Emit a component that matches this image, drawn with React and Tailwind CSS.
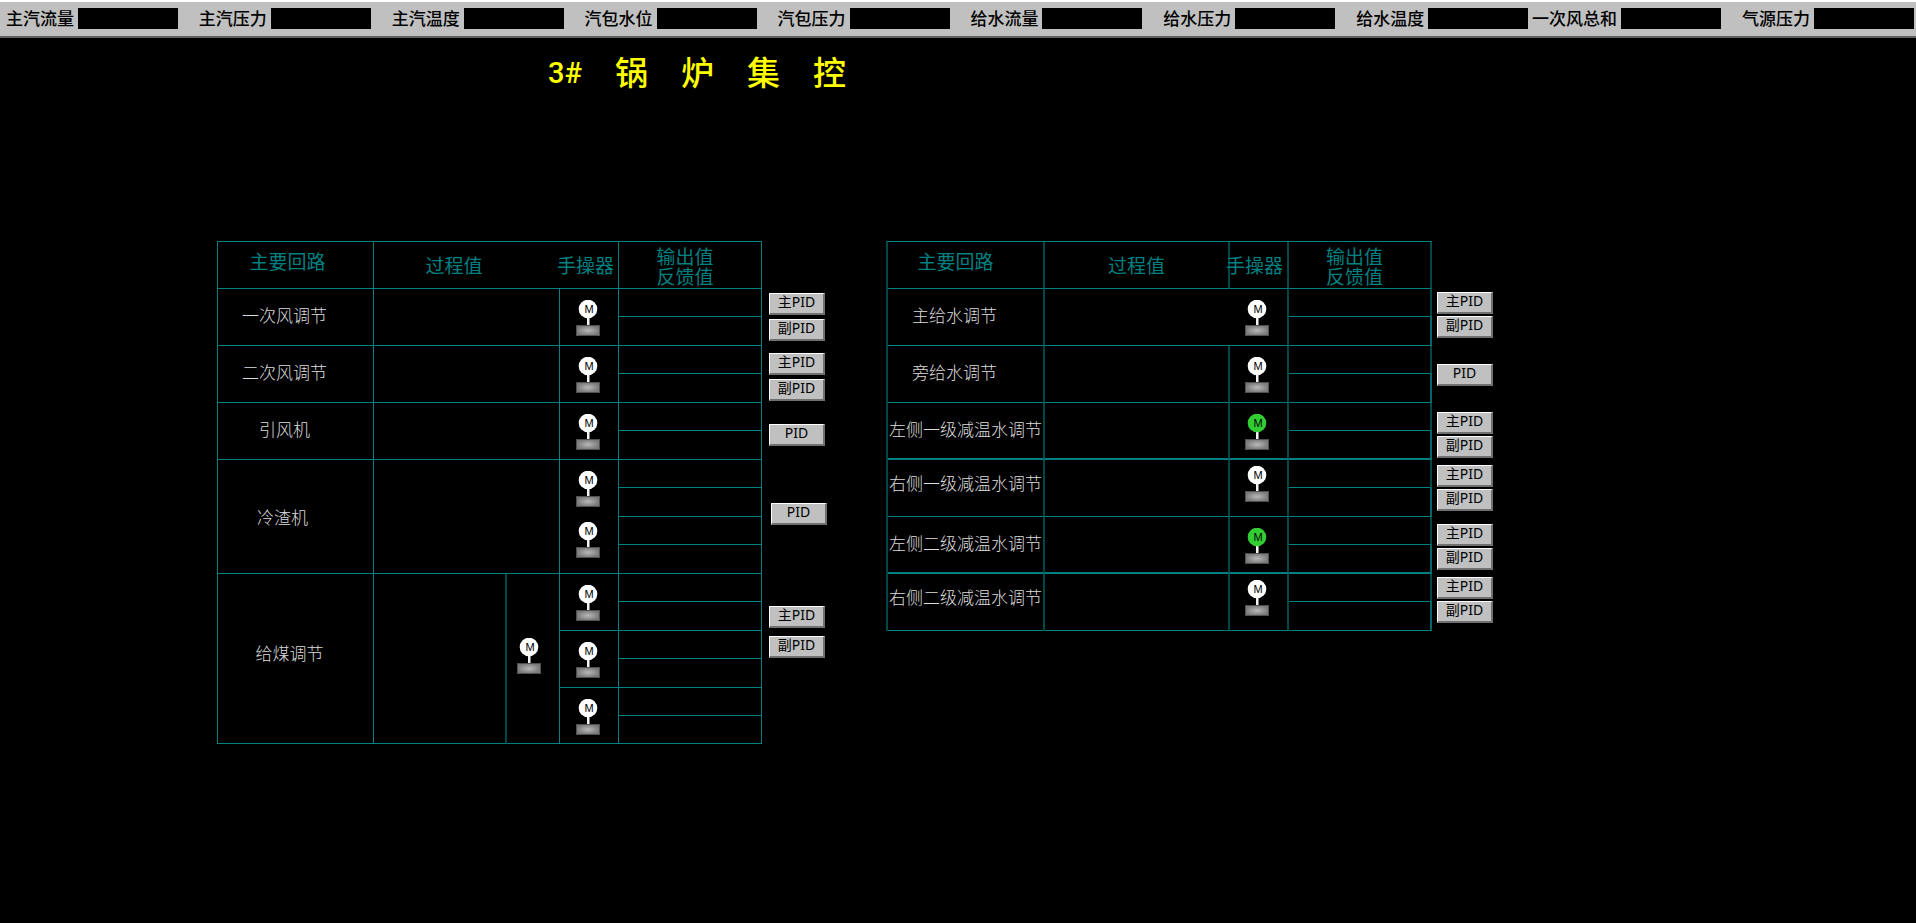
import React from "react";

const METERS = [
  "主汽流量", "主汽压力", "主汽温度", "汽包水位", "汽包压力",
  "给水流量", "给水压力", "给水温度", "一次风总和", "气源压力",
];

function Motor({ on = false }) {
  return (
    <svg width="24" height="36" viewBox="0 0 24 36" role="img" aria-label={on ? "电机运行" : "电机停止"} className="block">
      <defs>
        <radialGradient id="motor-base">
          <stop offset="0" stopColor="#b8b8b8" />
          <stop offset="1" stopColor="#7a7a7a" />
        </radialGradient>
      </defs>
      <rect x="11" y="18" width="3" height="8" fill="#808080" />
      <rect x="11" y="18" width="2" height="8" fill="#f4f4f4" />
      <circle cx="12" cy="9" r="9.3" fill={on ? "#32cd32" : "#ffffff"} />
      <text x="13" y="13" textAnchor="middle" fontSize="11" fontFamily="'Liberation Sans', sans-serif" fill="#000000">M</text>
      <rect x="0.5" y="25.5" width="23" height="10" fill="url(#motor-base)" stroke="#505050" />
    </svg>
  );
}

function PidButton({ kind = "" }) {
  return (
    <button
      type="button"
      className="flex h-[22px] w-14 justify-center border-t border-r-2 border-b-2 border-l border-t-white border-r-[#707070] border-b-[#707070] border-l-white bg-[#c0c0c0] font-['Noto_Sans','Noto_Sans_CJK_SC',sans-serif] text-sm leading-4 whitespace-nowrap text-black"
    >
      {kind}PID
    </button>
  );
}

function PidGroup({ kinds, className }) {
  return (
    <div className={`flex flex-col ${className}`}>
      {kinds.map((kind) => (
        <PidButton key={kind} kind={kind} />
      ))}
    </div>
  );
}

const HEAD = "border-b border-b-[#008080] p-0 text-[19px] leading-5 font-normal whitespace-nowrap text-[#008080]";
const CELL = "border-b border-b-[#008080] p-0 whitespace-nowrap";
const LEFT = "border-r border-r-[#008080]";
const RIGHT = "border-r-2 border-r-[#004848]";

function OutputCell({ line }) {
  return <td className={`${CELL} ${line}`} />;
}

function MotorCell({ line, on, rowSpan = 2, count = 1, pad = "pt-[11px]" }) {
  return (
    <td rowSpan={rowSpan} className={`${CELL} ${line} align-top`}>
      <div className={`flex flex-col items-center gap-[15px] pr-[3px] ${pad}`}>
        {Array.from({ length: count }, (_, i) => (
          <Motor key={i} on={on} />
        ))}
      </div>
    </td>
  );
}

function LeftTable() {
  const half = (
    <tr className="h-[29px]">
      <OutputCell line={LEFT} />
    </tr>
  );
  return (
    <table className="w-full table-fixed border-separate border-spacing-0 border-t border-l border-[#008080] text-[17px] leading-5 text-[#dcdcdc]">
      <colgroup>
        <col className="w-[28.68%]" />
        <col className="w-[24.45%]" />
        <col className="w-[9.74%]" />
        <col className="w-[10.85%]" />
        <col className="w-[26.28%]" />
      </colgroup>
      <thead>
        <tr className="h-[47px]">
          <th scope="col" className={`${HEAD} ${LEFT} pr-4 pb-2`}>主要回路</th>
          <th scope="col" colSpan={2} className={`${HEAD} pr-[26px]`}>过程值</th>
          <th scope="col" className={`${HEAD} ${LEFT}`}>
            <div className="flex justify-end pr-1">
              <span>手操器</span>
            </div>
          </th>
          <th scope="col" className={`${HEAD} ${LEFT} pt-0.5 pr-2.5`}>输出值<br />反馈值</th>
        </tr>
      </thead>
      <tbody>
        {["一次风调节", "二次风调节", "引风机"].map((name) => (
          <React.Fragment key={name}>
            <tr className="h-7">
              <th scope="row" rowSpan={2} className={`${CELL} ${LEFT} pr-[22px] pb-1 font-light`}>{name}</th>
              <td rowSpan={2} colSpan={2} className={`${CELL} ${LEFT}`} />
              <MotorCell line={LEFT} />
              <OutputCell line={LEFT} />
            </tr>
            {half}
          </React.Fragment>
        ))}
        <tr className="h-7">
          <th scope="row" rowSpan={4} className={`${CELL} ${LEFT} pr-[26px] font-light`}>冷渣机</th>
          <td rowSpan={4} colSpan={2} className={`${CELL} ${LEFT}`} />
          <MotorCell line={LEFT} rowSpan={4} count={2} />
          <OutputCell line={LEFT} />
        </tr>
        {half}
        <tr className="h-7">
          <OutputCell line={LEFT} />
        </tr>
        {half}
        <tr className="h-7">
          <th scope="row" rowSpan={6} className={`${CELL} ${LEFT} pr-3 pb-3 font-light`}>给煤调节</th>
          <td rowSpan={6} className={`${CELL} ${RIGHT}`} />
          <td rowSpan={6} className={`${CELL} ${LEFT} pb-1.5`}>
            <div className="flex justify-center pr-2">
              <Motor />
            </div>
          </td>
          <MotorCell line={LEFT} />
          <OutputCell line={LEFT} />
        </tr>
        {half}
        <tr className="h-7">
          <MotorCell line={LEFT} />
          <OutputCell line={LEFT} />
        </tr>
        {half}
        <tr className="h-7">
          <MotorCell line={LEFT} />
          <OutputCell line={LEFT} />
        </tr>
        <tr className="h-7">
          <OutputCell line={LEFT} />
        </tr>
      </tbody>
    </table>
  );
}

const RIGHT_ROWS = [
  { name: "主给水调节", label: "pr-[22px] pb-1", open: true },
  { name: "旁给水调节", label: "pr-[22px] pb-1" },
  { name: "左侧一级减温水调节", label: "pb-1", on: true, thick: true },
  { name: "右侧一级减温水调节", label: "pb-2.5", pad: "pt-1.5" },
  { name: "左侧二级减温水调节", label: "pb-1", on: true, thick: true },
  { name: "右侧二级减温水调节", label: "pb-2.5", pad: "pt-1.5" },
];

function RightTable() {
  return (
    <table className="w-full table-fixed border-separate border-spacing-0 border-t border-l-2 border-t-[#008080] border-l-[#004848] text-[17px] leading-5 text-[#dcdcdc]">
      <colgroup>
        <col className="w-[28.86%]" />
        <col className="w-[34.01%]" />
        <col className="w-[10.84%]" />
        <col className="w-[26.29%]" />
      </colgroup>
      <thead>
        <tr className="h-[47px]">
          <th scope="col" className={`${HEAD} ${RIGHT} pr-5 pb-2`}>主要回路</th>
          <th scope="col" className={`${HEAD} ${RIGHT}`}>过程值</th>
          <th scope="col" className={`${HEAD} ${RIGHT}`}>
            <div className="flex justify-end pr-1">
              <span>手操器</span>
            </div>
          </th>
          <th scope="col" className={`${HEAD} ${RIGHT} pt-0.5 pr-2.5`}>输出值<br />反馈值</th>
        </tr>
      </thead>
      <tbody>
        {RIGHT_ROWS.map(({ name, label, open, on, thick, pad }) => {
          const base = thick ? "border-b-2" : "";
          return (
            <React.Fragment key={name}>
              <tr className="h-7">
                <th scope="row" rowSpan={2} className={`${CELL} ${RIGHT} ${base} ${label} font-light`}>{name}</th>
                <td rowSpan={2} className={`${CELL} ${base} ${open ? "" : RIGHT}`} />
                <MotorCell line={`${RIGHT} ${base}`} on={on} pad={pad} />
                <OutputCell line={RIGHT} />
              </tr>
              <tr className="h-[29px]">
                <td className={`${CELL} ${base} border-r-2 border-r-[#006868]`} />
              </tr>
            </React.Fragment>
          );
        })}
      </tbody>
    </table>
  );
}

export default function App() {
  const pair = ["主", "副"];
  return (
    <div className="min-h-screen bg-black font-['Noto_Sans_CJK_SC',sans-serif]">
      <header className="grid h-[38px] grid-cols-[178fr_repeat(9,193fr)] items-center border-t-2 border-b-2 border-t-white border-b-[#606060] bg-[#c0c0c0] pr-0.5 pb-px">
        {METERS.map((name, i) => (
          <div key={name} className="flex items-center justify-end gap-1 text-[17px] leading-5 font-medium whitespace-nowrap text-black">
            <label htmlFor={`meter-${i}`} className="pb-0.5">{name}</label>
            <output id={`meter-${i}`} className="h-[21px] w-[100px] bg-black" />
          </div>
        ))}
      </header>

      <h1 className="flex h-[203px] items-start gap-[33px] pt-[17px] pl-[28.6%] text-[33px] leading-8 font-medium text-[#ffff00]">
        <span className="font-['Roboto',sans-serif] text-[29px] leading-9">3#</span>
        <span>锅</span>
        <span>炉</span>
        <span>集</span>
        <span>控</span>
      </h1>

      <main className="grid grid-cols-[217fr_545fr_124fr_546fr_484fr] items-start">
        <div className="col-start-2">
          <LeftTable />
        </div>
        <div className="pt-[52px] pl-[7px]">
          <PidGroup kinds={pair} className="gap-1" />
          <PidGroup kinds={pair} className="mt-3 gap-1" />
          <PidGroup kinds={[""]} className="mt-[23px]" />
          <PidGroup kinds={[""]} className="mt-[57px] pl-0.5" />
          <PidGroup kinds={pair} className="mt-[81px] gap-2" />
        </div>
        <RightTable />
        <div className="pt-[51px] pl-[5px]">
          <PidGroup kinds={pair} className="gap-0.5" />
          <PidGroup kinds={[""]} className="mt-[26px]" />
          <PidGroup kinds={pair} className="mt-[26px] gap-0.5" />
          <PidGroup kinds={pair} className="mt-[7px] gap-0.5" />
          <PidGroup kinds={pair} className="mt-[13px] gap-0.5" />
          <PidGroup kinds={pair} className="mt-[7px] gap-0.5" />
        </div>
      </main>
    </div>
  );
}
